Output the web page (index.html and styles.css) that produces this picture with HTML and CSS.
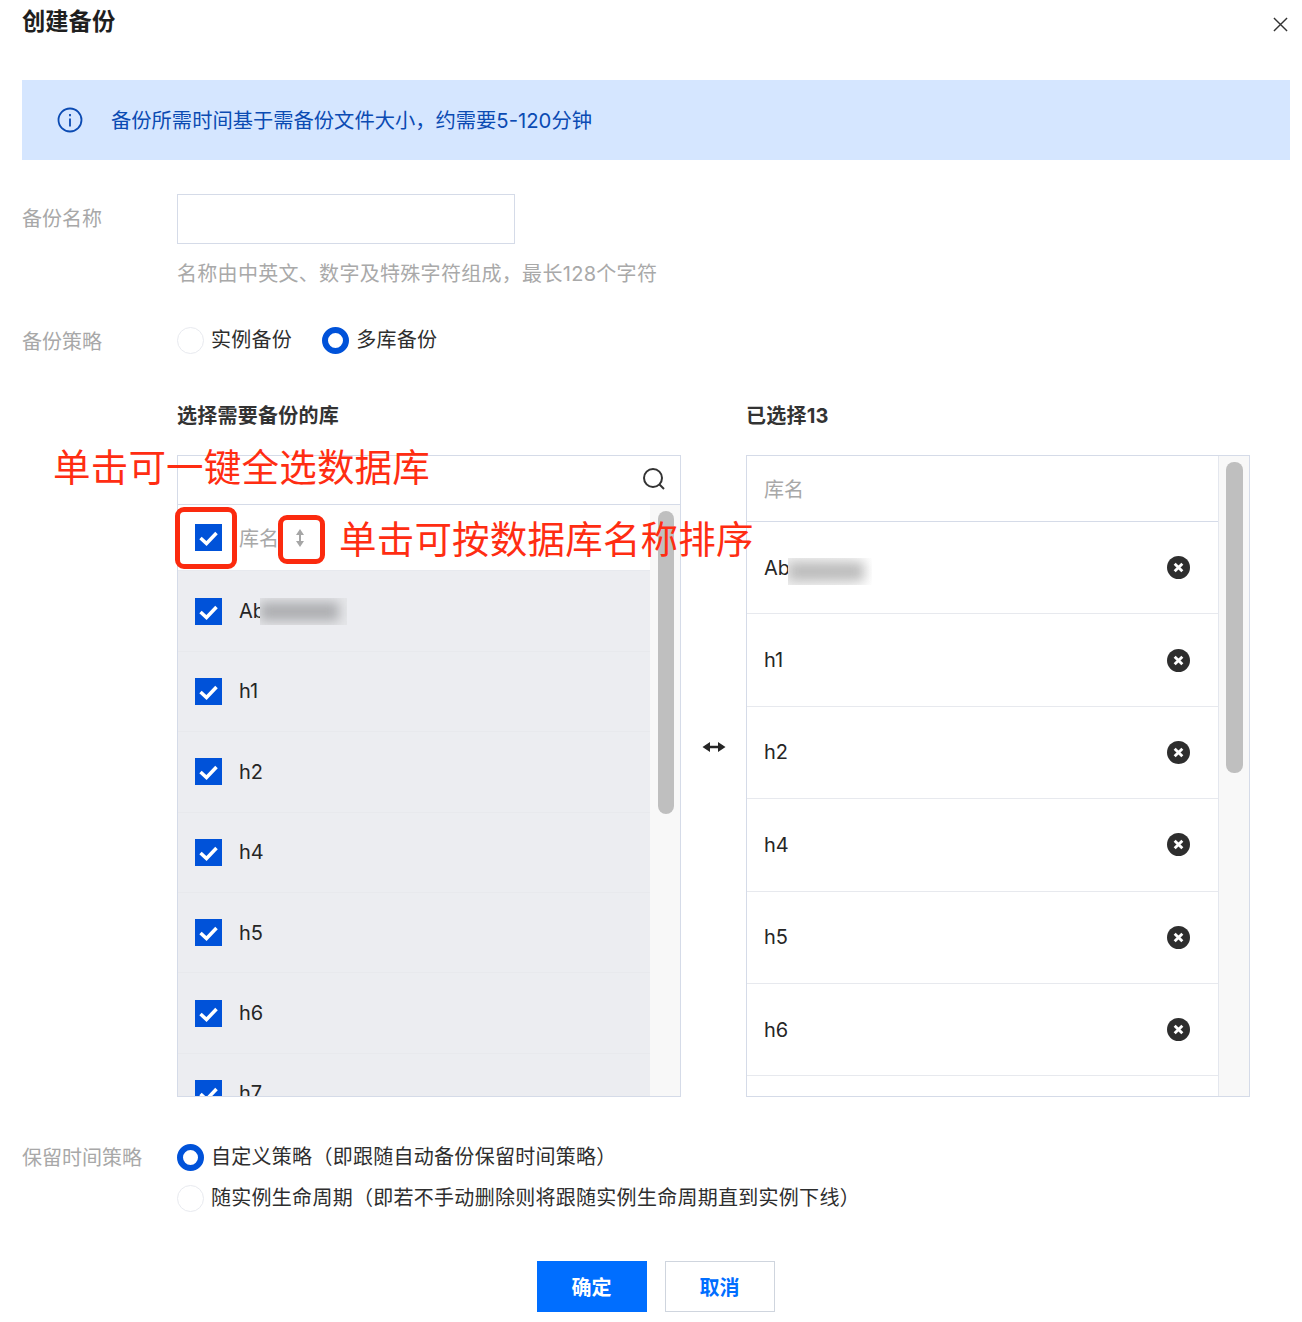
FILE: index.html
```html
<!DOCTYPE html>
<html lang="zh-CN">
<head>
<meta charset="utf-8">
<title>创建备份</title>
<link rel="stylesheet" href="styles.css">
</head>
<body>
<div class="dialog">
  <header class="head">
    <h1 class="title">创建备份</h1>
    <svg class="close" viewBox="0 0 16 16"><path d="M1 1L15 15M15 1L1 15"/></svg>
  </header>

  <div class="notice">
    <svg class="info" viewBox="0 0 26 26"><circle cx="13" cy="13" r="11.5"/><path d="M13 11.5V19.5M13 7V9.2"/></svg>
    <span>备份所需时间基于需备份文件大小，约需要5-120分钟</span>
  </div>

  <div class="field name-field">
    <label class="label">备份名称</label>
    <div class="control">
      <div class="input"></div>
      <p class="hint">名称由中英文、数字及特殊字符组成，最长128个字符</p>
    </div>
  </div>

  <div class="field strategy-field">
    <label class="label">备份策略</label>
    <div class="radios">
      <span class="radio"><i class="dot"></i>实例备份</span>
      <span class="radio"><i class="dot on"></i>多库备份</span>
    </div>
  </div>

  <div class="transfer">
    <section class="side">
      <h2 class="side-title">选择需要备份的库</h2>
      <div class="panel">
        <div class="search">
          <svg class="search-icon" viewBox="0 0 24 24"><circle cx="11" cy="11" r="9"/><path d="M17.5 17.5L22 22"/></svg>
        </div>
        <div class="panel-body">
          <div class="list">
            <div class="src-head">
              <svg class="check" viewBox="0 0 27 27"><path d="M5.500 14L11.500 19.500L21.500 9"/></svg>
              <span class="col-name">库名</span>
              <svg class="sort" viewBox="0 0 12 20"><path d="M6 3V17"/><path class="tip" d="M2 7L6 1L10 7ZM2 13L6 19L10 13Z"/></svg>
            </div>
            <div class="src-row"><svg class="check" viewBox="0 0 27 27"><path d="M5.500 14L11.500 19.500L21.500 9"/></svg><span>Ab</span><i class="mask mask-grey"></i></div>
            <div class="src-row"><svg class="check" viewBox="0 0 27 27"><path d="M5.500 14L11.500 19.500L21.500 9"/></svg><span>h1</span></div>
            <div class="src-row"><svg class="check" viewBox="0 0 27 27"><path d="M5.500 14L11.500 19.500L21.500 9"/></svg><span>h2</span></div>
            <div class="src-row"><svg class="check" viewBox="0 0 27 27"><path d="M5.500 14L11.500 19.500L21.500 9"/></svg><span>h4</span></div>
            <div class="src-row"><svg class="check" viewBox="0 0 27 27"><path d="M5.500 14L11.500 19.500L21.500 9"/></svg><span>h5</span></div>
            <div class="src-row"><svg class="check" viewBox="0 0 27 27"><path d="M5.500 14L11.500 19.500L21.500 9"/></svg><span>h6</span></div>
            <div class="src-row"><svg class="check" viewBox="0 0 27 27"><path d="M5.500 14L11.500 19.500L21.500 9"/></svg><span>h7</span></div>
          </div>
          <div class="track src-track"><div class="thumb src-thumb"></div></div>
        </div>
      </div>
    </section>

    <div class="swap">
      <svg class="swap-icon" viewBox="0 0 24 12"><path d="M3 6H21"/><path class="tip" d="M8 1V11L0.500 6ZM16 1V11L23.500 6Z"/></svg>
    </div>

    <section class="side">
      <h2 class="side-title">已选择13</h2>
      <div class="panel panel-right">
        <div class="list">
          <div class="dst-head">库名</div>
          <div class="dst-row"><span>Ab</span><i class="mask mask-white"></i><svg class="remove" viewBox="0 0 24 24"><circle cx="12" cy="12" r="12"/><path d="M8 8L16 16M16 8L8 16"/></svg></div>
          <div class="dst-row"><span>h1</span><svg class="remove" viewBox="0 0 24 24"><circle cx="12" cy="12" r="12"/><path d="M8 8L16 16M16 8L8 16"/></svg></div>
          <div class="dst-row"><span>h2</span><svg class="remove" viewBox="0 0 24 24"><circle cx="12" cy="12" r="12"/><path d="M8 8L16 16M16 8L8 16"/></svg></div>
          <div class="dst-row"><span>h4</span><svg class="remove" viewBox="0 0 24 24"><circle cx="12" cy="12" r="12"/><path d="M8 8L16 16M16 8L8 16"/></svg></div>
          <div class="dst-row"><span>h5</span><svg class="remove" viewBox="0 0 24 24"><circle cx="12" cy="12" r="12"/><path d="M8 8L16 16M16 8L8 16"/></svg></div>
          <div class="dst-row"><span>h6</span><svg class="remove" viewBox="0 0 24 24"><circle cx="12" cy="12" r="12"/><path d="M8 8L16 16M16 8L8 16"/></svg></div>
        </div>
        <div class="track dst-track"><div class="thumb dst-thumb"></div></div>
      </div>
    </section>
  </div>

  <div class="field keep-field">
    <label class="label">保留时间策略</label>
    <div class="keep-options">
      <span class="radio"><i class="dot on"></i>自定义策略（即跟随自动备份保留时间策略）</span>
      <span class="radio"><i class="dot"></i>随实例生命周期（即若不手动删除则将跟随实例生命周期直到实例下线）</span>
    </div>
  </div>

  <div class="actions">
    <button class="btn primary">确定</button>
    <button class="btn ghost">取消</button>
  </div>

  <div class="note note-all">单击可一键全选数据库</div>
  <div class="note note-sort">单击可按数据库名称排序</div>
  <div class="mark mark-check"></div>
  <div class="mark mark-sort"></div>
</div>
</body>
</html>
```
FILE: styles.css
```css
* { box-sizing: border-box; }
html, body { margin: 0; height: 100%; overflow: hidden; background: #fff; }
body {
  font-family: "Inter", "Noto Sans CJK SC", sans-serif;
  font-size: 20px;
  color: #262626;
}
.dialog { position: relative; width: 1302px; height: 1322px; padding: 0 12px 0 22px; }

.head { display: flex; justify-content: space-between; align-items: flex-start; height: 80px; }
.title { margin: 0; font-size: 23.300px; line-height: 44px; font-weight: 700; color: #1f1f1f; }
.close { width: 15px; height: 15px; margin: 17px 2px 0 0; fill: none; stroke: #333; stroke-width: 1.500; }

.notice {
  display: flex; align-items: center; height: 80px; padding-left: 35px;
  background: #d5e6ff; color: #0b4bb3; font-size: 20.300px;
}
.notice span { margin-top: -2px; }
.info { width: 26px; height: 26px; margin-right: 28px; fill: none; stroke: #0b4bb3; stroke-width: 1.800; }

.field { display: flex; }
.label { flex: 0 0 155px; color: #a8a8a8; font-size: 20px; line-height: 28px; }
.name-field { margin-top: 34px; height: 132px; }
.name-field .label { margin-top: 11px; }
.input { width: 338px; height: 50px; border: 1px solid #d5dbe8; }
.hint { margin: 16px 0 0; color: #a9a9a9; font-size: 20px; line-height: 28px; letter-spacing: .3px; }

.strategy-field { height: 75px; }
.strategy-field .label { margin-top: 2px; }
.radios { display: flex; gap: 30px; }
.radio { display: flex; align-items: center; height: 28px; line-height: 28px; color: #2e2e2e; white-space: nowrap; letter-spacing: .28px; }
.dot { flex: none; width: 27px; height: 27px; margin-right: 7px; border-radius: 50%; border: 1px solid #e8eaef; background: #fff; }
.dot.on { border: 6px solid #0052d9; }

.transfer { display: flex; height: 696px; margin-left: 155px; }
.side { width: 504px; display: flex; flex-direction: column; }
.side-title { margin: 0; height: 54px; font-size: 20px; line-height: 28px; font-weight: 700; color: #333; padding-top: 1px; letter-spacing: .25px; }
.panel { position: relative; height: 642px; border: 1px solid #d5dbe8; overflow: hidden; }
.search { display: flex; justify-content: flex-end; align-items: center; height: 49px; padding-right: 14px; border-bottom: 1px solid #d5dbe8; }
.search-icon { width: 24px; height: 24px; margin-top: -3px; fill: none; stroke: #333; stroke-width: 2; }

.panel-body { display: flex; height: 592px; }
.list { flex: 1; min-width: 0; overflow: hidden; }
.src-head, .src-row { display: flex; align-items: center; position: relative; padding-left: 17px; }
.src-head { height: 66.400px; background: #fff; border-bottom: 1px solid #e7e9ee; }
.src-row { height: 80.400px; background: #ecedf1; border-bottom: 1px solid #e8e9ed; }
.check { flex: none; width: 27px; height: 27px; margin-right: 17px; background: #0052d9; fill: none; stroke: #fff; stroke-width: 3.500; }
.col-name { color: #a8a8a8; }
.sort { width: 12px; height: 20px; margin-left: 15px; fill: none; stroke: #a6a6a6; stroke-width: 2; }
.sort .tip, .swap-icon .tip { stroke: none; }
.sort .tip { fill: #a6a6a6; }

.track { flex: none; width: 30px; background: #f8f8f8; position: relative; }
.thumb { position: absolute; background: #bfbfbf; border-radius: 8px; }
.src-thumb { left: 8px; top: 6px; width: 16px; height: 303px; }
.panel-right { display: flex; }
.dst-track { width: 31px; border-left: 1px solid #e4e7ee; }
.dst-thumb { left: 7px; top: 6px; width: 17px; height: 311px; }

.mask { position: absolute; top: 50%; overflow: hidden; }
.mask::before { content: ""; position: absolute; inset: 4px 8px 4px 0; background: #adaeb1; filter: blur(6px); }
.mask-grey { left: 82px; width: 87px; height: 27px; margin-top: -13px; background: #e6e7ea; }
.mask-white { left: 41px; width: 84px; height: 27px; margin-top: -10px; background: linear-gradient(90deg, #f2f2f2, #f7f7f7 70%, #fff); }
.mask-white::before { background: #bcbcbc; }

.swap { flex: 0 0 65px; display: flex; justify-content: center; padding-top: 340px; }
.swap-icon { width: 24px; height: 12px; fill: none; stroke: #262626; stroke-width: 2.500; }
.swap-icon .tip { fill: #262626; }

.dst-head { display: flex; align-items: center; height: 66px; padding-left: 17px; color: #a8a8a8; border-bottom: 1px solid #d5dbe8; }
.dst-row { position: relative; display: flex; justify-content: space-between; align-items: center; height: 92.400px; padding: 0 28px 0 17px; border-bottom: 1px solid #e7e9ee; }
.remove { width: 23px; height: 23px; }
.remove circle { fill: #2e2e2e; }
.remove path { fill: none; stroke: #fff; stroke-width: 3; }

.keep-field { margin-top: 46px; height: 84px; }
.keep-field .label { margin-top: 1px; }
.keep-options { display: flex; flex-direction: column; gap: 13px; }

.actions { display: flex; justify-content: center; gap: 18px; margin-top: 34px; padding-right: 1px; }
.btn { width: 110px; height: 51px; padding: 0; font: 700 20px "Inter", "Noto Sans CJK SC", sans-serif; border: 1px solid #cfd5de; }
.primary { background: #006eff; color: #fff; border-color: #006eff; }
.ghost { background: #fff; color: #006eff; }

.note { position: absolute; color: #ff2d12; font-size: 37.500px; line-height: 50px; white-space: nowrap; letter-spacing: .2px; }
.note-all { left: 53px; top: 443px; }
.note-sort { left: 339px; top: 515px; }
.mark { position: absolute; border: 5px solid #fb2a0e; border-radius: 9px; }
.mark-check { left: 175px; top: 507px; width: 62px; height: 62px; }
.mark-sort { left: 278px; top: 515px; width: 47px; height: 49px; }
```
